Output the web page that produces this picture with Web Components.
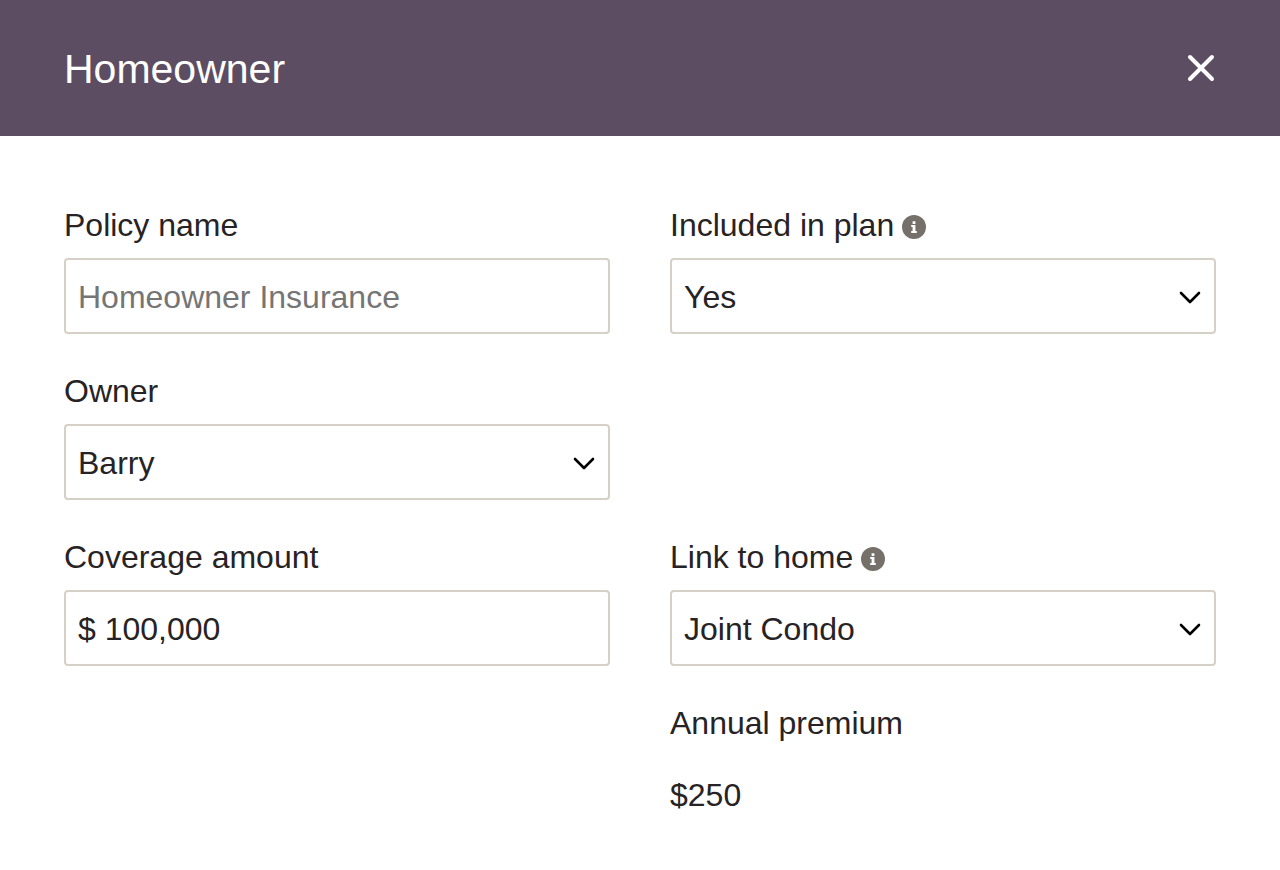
<!DOCTYPE html>
<html lang="en">
<head>
<meta charset="utf-8">
<meta name="viewport" content="width=device-width, initial-scale=1">
<title>Homeowner</title>
<style>
  body { margin: 0; background: #fff; color: #272324; font: 32px/46px "Liberation Sans", Arial, sans-serif; }
</style>
</head>
<body>
<policy-dialog heading="Homeowner">
  <text-field label="Policy name" placeholder="Homeowner Insurance"></text-field>
  <select-field label="Included in plan" info options="Yes|No"></select-field>
  <select-field class="wide" label="Owner" options="Barry|Joint"></select-field>
  <text-field label="Coverage amount" value="$ 100,000"></text-field>
  <select-field label="Link to home" info options="Joint Condo|None"></select-field>
  <read-only-field class="right" label="Annual premium">$250</read-only-field>
</policy-dialog>

<script>
  const fieldStyles = `
    *, *::before, *::after { box-sizing: border-box; }
    :host { display: flex; flex-direction: column; gap: 10px; min-width: 0; }
    .caption { display: flex; align-items: center; gap: 8px; }
    .box {
      width: 100%; height: 76px; margin: 0; padding: 2px 12px 0;
      border: 2px solid #d7d0c6; border-radius: 4px; background: #fff;
      font: inherit; color: inherit; outline: none;
    }
    .box:focus-visible { border-color: #5c4d62; }
  `;

  class PolicyDialog extends HTMLElement {
    connectedCallback() {
      this.attachShadow({ mode: "open" }).innerHTML = `
        <style>
          *, *::before, *::after { box-sizing: border-box; }
          :host { display: block; }
          header {
            display: flex; align-items: center; justify-content: space-between;
            min-height: 136px; padding: 0 64px; background: #5c4d62; color: #fff;
          }
          h1 { margin: 0; padding-top: 2px; font-size: 41px; font-weight: 400; line-height: 48px; }
          button {
            display: flex; padding: 0; border: 0; background: none; color: inherit; cursor: pointer;
          }
          main {
            display: grid; grid-template-columns: minmax(0, 1fr) minmax(0, 1fr);
            gap: 34px 60px; padding: 66px 64px 32px;
          }
          ::slotted(.wide) { grid-column: 1 / -1; width: calc(50% - 30px); }
          ::slotted(.right) { grid-column: 2; }
        </style>
        <header>
          <h1></h1>
          <button type="button" aria-label="Close">
            <svg width="30" height="30" viewBox="0 0 30 30" fill="none" stroke="currentColor" stroke-width="4" stroke-linecap="round" aria-hidden="true"><path d="M4 4 26 26M26 4 4 26"/></svg>
          </button>
        </header>
        <main><slot></slot></main>`;
      this.shadowRoot.querySelector("h1").textContent = this.getAttribute("heading");
    }
  }

  class InfoTip extends HTMLElement {
    connectedCallback() {
      this.attachShadow({ mode: "open" }).innerHTML = `
        <style>
          :host { display: flex; padding-top: 4px; }
          button { display: flex; padding: 0; border: 0; background: none; color: #76706b; cursor: pointer; }
        </style>
        <button type="button" aria-label="More information">
          <svg width="24" height="24" viewBox="0 0 24 24" aria-hidden="true">
            <circle cx="12" cy="12" r="12" fill="currentColor"/>
            <path fill="#fff" d="M10.6 6.2h2.8v2.7h-2.8zM9.2 10h4.2v6h1.4v2H9.2v-2h1.4v-4H9.2z"/>
          </svg>
        </button>`;
    }
  }

  class TextField extends HTMLElement {
    connectedCallback() {
      this.attachShadow({ mode: "open" }).innerHTML = `
        <style>${fieldStyles}
          .box::placeholder { color: #757575; opacity: 1; }
        </style>
        <div class="caption"><label for="control"></label></div>
        <input class="box" id="control" type="text">`;
      this.shadowRoot.querySelector("label").textContent = this.getAttribute("label");
      const input = this.shadowRoot.querySelector("input");
      input.placeholder = this.getAttribute("placeholder") || "";
      input.value = this.getAttribute("value") || "";
    }
  }

  class SelectField extends HTMLElement {
    connectedCallback() {
      this.attachShadow({ mode: "open" }).innerHTML = `
        <style>${fieldStyles}
          .control { display: grid; align-items: center; }
          .control > * { grid-area: 1 / 1; }
          select.box { appearance: none; padding-right: 48px; cursor: pointer; }
          .chevron { justify-self: end; margin: 2px 14px 0 0; pointer-events: none; }
        </style>
        <div class="caption"><label for="control"></label></div>
        <div class="control">
          <select class="box" id="control"></select>
          <svg class="chevron" width="24" height="16" viewBox="0 0 24 16" fill="none" stroke="#000" stroke-width="2.6" stroke-linecap="round" stroke-linejoin="round" aria-hidden="true"><path d="M3 4l9 9 9-9"/></svg>
        </div>`;
      this.shadowRoot.querySelector("label").textContent = this.getAttribute("label");
      if (this.hasAttribute("info")) {
        this.shadowRoot.querySelector(".caption").append(document.createElement("info-tip"));
      }
      const select = this.shadowRoot.querySelector("select");
      for (const name of this.getAttribute("options").split("|")) select.add(new Option(name));
    }
  }

  class ReadOnlyField extends HTMLElement {
    connectedCallback() {
      this.attachShadow({ mode: "open" }).innerHTML = `
        <style>${fieldStyles}
          .value { display: flex; align-items: center; height: 76px; padding-top: 2px; }
        </style>
        <div class="caption" id="caption"></div>
        <div class="value" role="group" aria-labelledby="caption"><slot></slot></div>`;
      this.shadowRoot.querySelector("#caption").textContent = this.getAttribute("label");
    }
  }

  customElements.define("info-tip", InfoTip);
  customElements.define("text-field", TextField);
  customElements.define("select-field", SelectField);
  customElements.define("read-only-field", ReadOnlyField);
  customElements.define("policy-dialog", PolicyDialog);
</script>
</body>
</html>
